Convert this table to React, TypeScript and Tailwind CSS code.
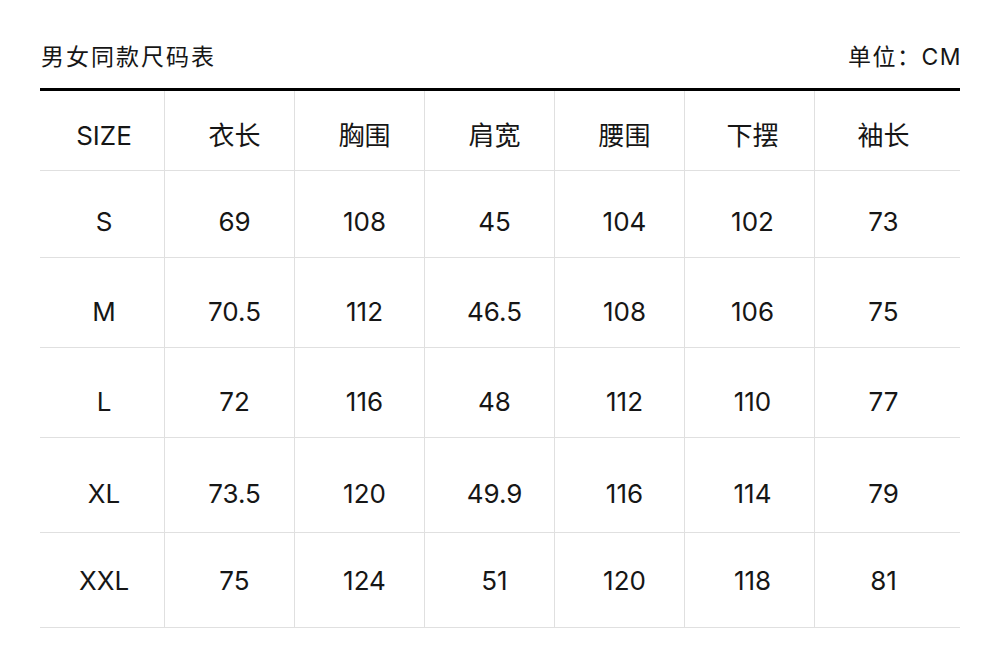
const headers = ["SIZE", "衣长", "胸围", "肩宽", "腰围", "下摆", "袖长"];

// row heights and the small downward nudge of the text inside each row
const rows = [
  { h: "h-[86px] pt-[14px]", cells: ["S", "69", "108", "45", "104", "102", "73"] },
  { h: "h-[89px] pt-[17px]", cells: ["M", "70.5", "112", "46.5", "108", "106", "75"] },
  { h: "h-[89px] pt-[17px]", cells: ["L", "72", "116", "48", "112", "110", "77"] },
  { h: "h-[94px] pt-[16px]", cells: ["XL", "73.5", "120", "49.9", "116", "114", "79"] },
  { h: "h-[94px]", cells: ["XXL", "75", "124", "51", "120", "118", "81"] },
];

// text isn't quite centred in its column in the design
const colPad = ["pl-[4px]", "pl-[10px]", "pl-[10px]", "pl-[10px]", "pl-[10px]", "pl-[6px]", "pr-[8px]"];

function Row({ cells, h }: { cells: string[]; h: string }) {
  return (
    <div className="grid grid-cols-[125px_130px_130px_130px_130px_130px_145px] border-b border-[#e0e0e0]">
      {cells.map((c, i) => (
        <div
          key={i}
          className={
            "flex items-center justify-center " +
            h +
            " " +
            colPad[i] +
            (i < cells.length - 1 ? " border-r border-[#e0e0e0]" : "")
          }
        >
          {c}
        </div>
      ))}
    </div>
  );
}

export default function App() {
  return (
    <div
      className="w-[1000px] h-[660px] bg-white px-[40px] pt-[42px] text-[#161616]"
      style={{ fontFamily: "Inter, 'Noto Sans CJK SC', sans-serif" }}
    >
      {/* Title bar */}
      <div className="flex items-center justify-between h-[30px] mb-[16px] text-[23px]">
        <span className="pl-px tracking-[2px]">男女同款尺码表</span>
        <span className="tracking-[1.5px] -mr-[2px]">单位：CM</span>
      </div>

      <div className="border-t-[3px] border-black" />

      {/* Table */}
      <div className="text-[26px]">
        <Row cells={headers} h="h-[79px] pt-[9px]" />
        {rows.map((r) => (
          <Row key={r.cells[0]} cells={r.cells} h={r.h} />
        ))}
      </div>
    </div>
  );
}
